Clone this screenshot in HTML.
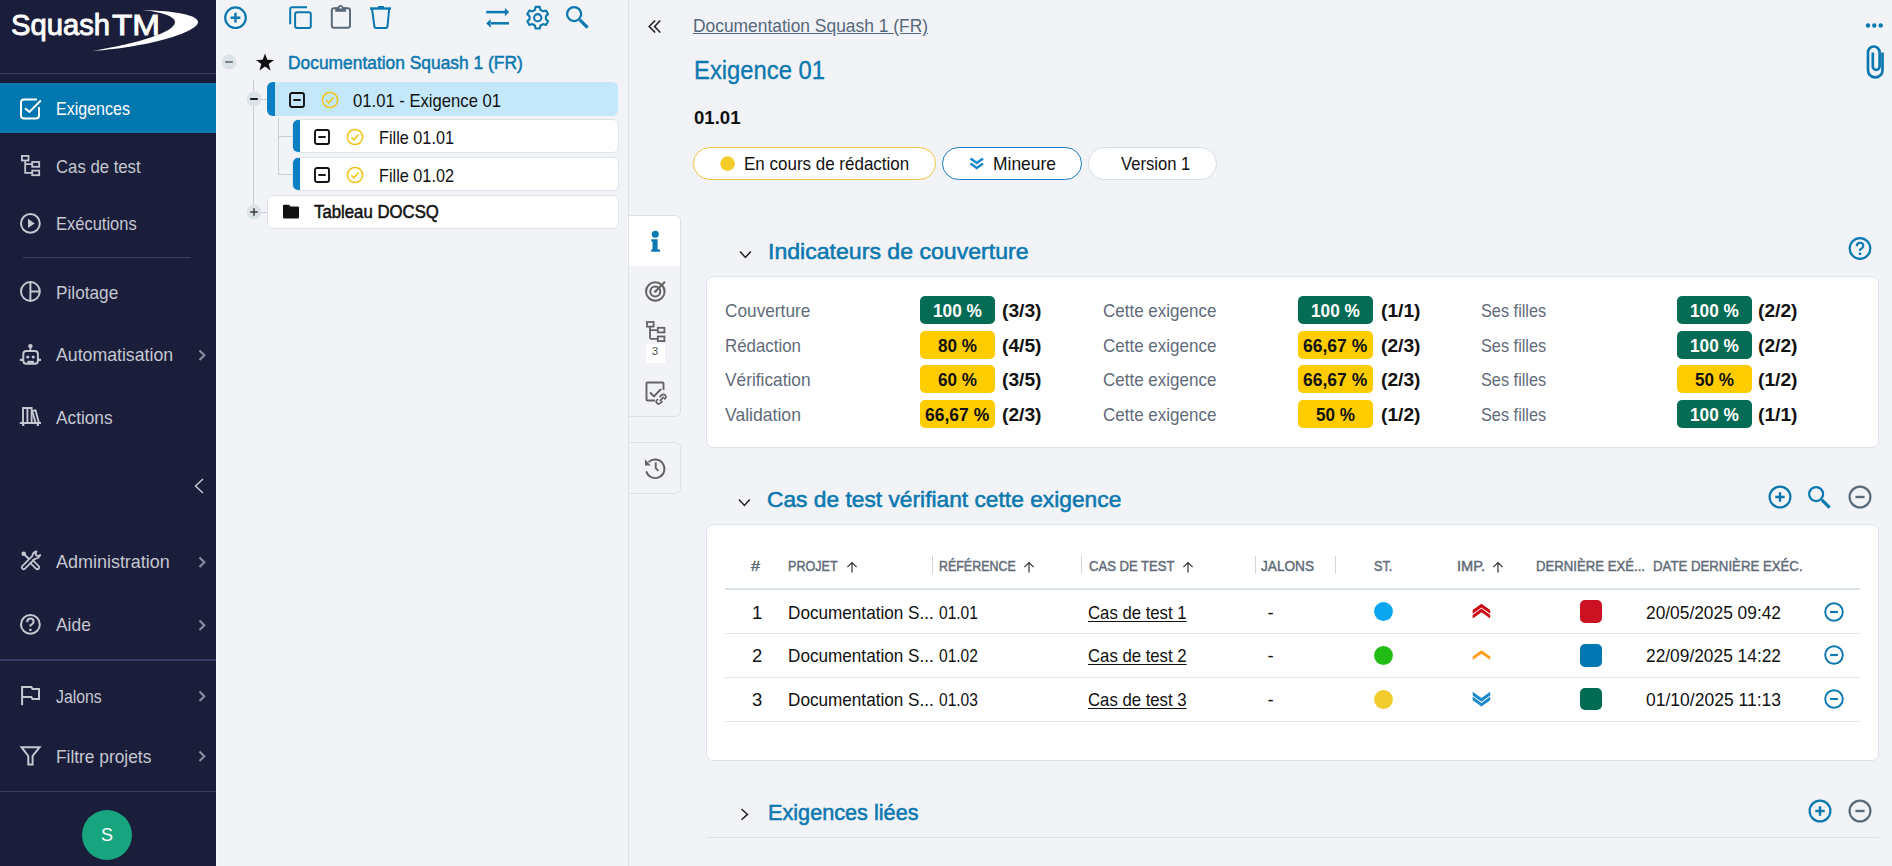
<!DOCTYPE html>
<html><head><meta charset="utf-8"><title>Squash TM</title>
<style>
html,body{margin:0;padding:0;}
body{width:1892px;height:866px;overflow:hidden;position:relative;background:#f2f3f7;font-family:"Liberation Sans",sans-serif;}
.t{position:absolute;white-space:nowrap;}
svg{overflow:visible}
</style></head><body>

<div style="position:absolute;left:0px;top:0px;width:216px;height:866px;background:#1b1e3a"></div>
<div style="position:absolute;left:216px;top:0px;width:1px;height:866px;background:#f7f8fb"></div>
<svg style="position:absolute;left:0px;top:0px" width="216" height="60" viewBox="0 0 216 60"><text x="11" y="35.3" font-family="Liberation Sans" font-size="29" fill="#fff" stroke="#fff" stroke-width="0.9" textLength="99" lengthAdjust="spacingAndGlyphs">Squash</text><text x="112" y="35.3" font-family="Liberation Sans" font-size="29" fill="#fff" stroke="#fff" stroke-width="0.9" textLength="48" lengthAdjust="spacingAndGlyphs">TM</text><path d="M143 10 C 175 11, 198 15, 198 22 C 198 32, 150 47, 92 51 C 140 43, 175 32, 175 22 C 175 16, 160 12, 143 10 Z" fill="#fff"/></svg>
<div style="position:absolute;left:0px;top:73px;width:216px;height:1px;background:#3d3f69"></div>
<div style="position:absolute;left:0px;top:83px;width:216px;height:50px;background:#0077ae"></div>
<div class="t" style="left:56px;top:100.44px;font-size:18.5px;line-height:18.5px;color:#ffffff;transform:scaleX(0.8670);transform-origin:0 0;">Exigences</div>
<div class="t" style="left:56px;top:157.74px;font-size:18.5px;line-height:18.5px;color:#c5c7d1;transform:scaleX(0.9041);transform-origin:0 0;">Cas de test</div>
<div class="t" style="left:56px;top:215.04px;font-size:18.5px;line-height:18.5px;color:#c5c7d1;transform:scaleX(0.8918);transform-origin:0 0;">Exécutions</div>
<div class="t" style="left:56px;top:284.24px;font-size:18.5px;line-height:18.5px;color:#c5c7d1;transform:scaleX(0.9304);transform-origin:0 0;">Pilotage</div>
<div class="t" style="left:56px;top:345.84px;font-size:18.5px;line-height:18.5px;color:#c5c7d1;transform:scaleX(0.9569);transform-origin:0 0;">Automatisation</div>
<div class="t" style="left:56px;top:408.84px;font-size:18.5px;line-height:18.5px;color:#c5c7d1;transform:scaleX(0.9330);transform-origin:0 0;">Actions</div>
<div class="t" style="left:56px;top:552.64px;font-size:18.5px;line-height:18.5px;color:#c5c7d1;transform:scaleX(0.9709);transform-origin:0 0;">Administration</div>
<div class="t" style="left:56px;top:616.14px;font-size:18.5px;line-height:18.5px;color:#c5c7d1;transform:scaleX(0.9399);transform-origin:0 0;">Aide</div>
<div class="t" style="left:56px;top:687.94px;font-size:18.5px;line-height:18.5px;color:#c5c7d1;transform:scaleX(0.8546);transform-origin:0 0;">Jalons</div>
<div class="t" style="left:56px;top:748.04px;font-size:18.5px;line-height:18.5px;color:#c5c7d1;transform:scaleX(0.9364);transform-origin:0 0;">Filtre projets</div>
<div style="position:absolute;left:23px;top:257px;width:168px;height:1px;background:#3d3f69"></div>
<div style="position:absolute;left:0px;top:659px;width:216px;height:2px;background:#393b63"></div>
<div style="position:absolute;left:0px;top:791px;width:216px;height:1px;background:#3d3f69"></div>
<svg style="position:absolute;left:196px;top:349px" width="12" height="12" viewBox="0 0 12 12"><path d="M3.5 1.5 L8.3 6.2 L3.5 10.9" fill="none" stroke="#8b8ea0" stroke-width="2.1"/></svg>
<svg style="position:absolute;left:196px;top:555.5px" width="12" height="12" viewBox="0 0 12 12"><path d="M3.5 1.5 L8.3 6.2 L3.5 10.9" fill="none" stroke="#8b8ea0" stroke-width="2.1"/></svg>
<svg style="position:absolute;left:196px;top:618.5px" width="12" height="12" viewBox="0 0 12 12"><path d="M3.5 1.5 L8.3 6.2 L3.5 10.9" fill="none" stroke="#8b8ea0" stroke-width="2.1"/></svg>
<svg style="position:absolute;left:196px;top:690px" width="12" height="12" viewBox="0 0 12 12"><path d="M3.5 1.5 L8.3 6.2 L3.5 10.9" fill="none" stroke="#8b8ea0" stroke-width="2.1"/></svg>
<svg style="position:absolute;left:196px;top:750px" width="12" height="12" viewBox="0 0 12 12"><path d="M3.5 1.5 L8.3 6.2 L3.5 10.9" fill="none" stroke="#8b8ea0" stroke-width="2.1"/></svg>
<svg style="position:absolute;left:192px;top:478px" width="14" height="16" viewBox="0 0 14 16"><path d="M11 1 L3.5 8 L11 15" fill="none" stroke="#c5c7d1" stroke-width="1.5"/></svg>
<div style="position:absolute;left:82px;top:810px;width:50px;height:50px;border-radius:50%;background:#17a57f;color:#fff;font-size:18px;line-height:50px;text-align:center">S</div>
<svg style="position:absolute;left:15px;top:95px" width="30" height="30" viewBox="0 0 30 30"><path d="M22 4.5 H9 Q6 4.5 6 7.5 V20.5 Q6 23.5 9 23.5 H21 Q24 23.5 24 20.5 V12" fill="none" stroke="#fff" stroke-width="2"/><path d="M10 13.2 L14.4 17 L25.8 5.5" fill="none" stroke="#fff" stroke-width="2"/></svg>
<svg style="position:absolute;left:15px;top:150px" width="30" height="30" viewBox="0 0 30 30"><rect x="6.9" y="5.9" width="6.6" height="4.6" fill="none" stroke="#c5c7d1" stroke-width="1.8"/><rect x="17.2" y="12" width="7" height="4.8" fill="none" stroke="#c5c7d1" stroke-width="1.8"/><rect x="17.2" y="20.6" width="7" height="4.6" fill="none" stroke="#c5c7d1" stroke-width="1.8"/><path d="M10.2 10.5 V22.8 H17.2 M10.2 14.2 H17.2" fill="none" stroke="#c5c7d1" stroke-width="1.8"/></svg>
<svg style="position:absolute;left:15px;top:208px" width="30" height="30" viewBox="0 0 30 30"><circle cx="15.4" cy="15.4" r="9.4" fill="none" stroke="#c5c7d1" stroke-width="2"/><path d="M13 10.7 V20.1 L19.7 15.4 Z" fill="#c5c7d1"/></svg>
<svg style="position:absolute;left:15px;top:277px" width="30" height="30" viewBox="0 0 30 30"><circle cx="15.4" cy="14.5" r="9.4" fill="none" stroke="#c5c7d1" stroke-width="2"/><path d="M15.4 5 V24 M15.4 14.5 H24.8" fill="none" stroke="#c5c7d1" stroke-width="2"/></svg>
<svg style="position:absolute;left:15px;top:339px" width="30" height="30" viewBox="0 0 30 30"><circle cx="15.4" cy="7.1" r="2.2" fill="#c5c7d1"/><path d="M15.4 7 V12" stroke="#c5c7d1" stroke-width="1.8"/><rect x="8.3" y="12.1" width="14.6" height="12.7" rx="3" fill="none" stroke="#c5c7d1" stroke-width="2"/><circle cx="12.8" cy="18" r="1.6" fill="#c5c7d1"/><circle cx="18.2" cy="18" r="1.6" fill="#c5c7d1"/><rect x="12.3" y="21.8" width="6.6" height="2.4" fill="#c5c7d1"/><path d="M4.8 20.8 H8.3 M22.9 20.8 H26" stroke="#c5c7d1" stroke-width="2.2"/></svg>
<svg style="position:absolute;left:15px;top:402px" width="30" height="30" viewBox="0 0 30 30"><path d="M4.8 21 H26 M8.2 21 V24 M22.8 21 V24" stroke="#c5c7d1" stroke-width="2.2" fill="none"/><path d="M8 21 V6 H16.6 V21 M12.4 6 V21" fill="none" stroke="#c5c7d1" stroke-width="1.9"/><path d="M17 9 L20.5 8.4 L24 21 M17.3 9.5 L20.6 21" fill="none" stroke="#c5c7d1" stroke-width="1.9"/></svg>
<svg style="position:absolute;left:15px;top:546px" width="30" height="30" viewBox="0 0 30 30"><circle cx="8.7" cy="7.8" r="2.3" fill="#c5c7d1"/><path d="M8.7 7.8 L14.2 13.3" stroke="#c5c7d1" stroke-width="2"/><path d="M17.27 13.73 L23.77 20.23 A1.8 1.8 0 0 1 21.23 22.77 L14.73 16.27" fill="none" stroke="#c5c7d1" stroke-width="1.8" stroke-linejoin="round"/><path d="M9.77 22.77 L19.77 12.77 Q23.5 13 25.2 9 L22.2 10 L20.5 8.3 L21.5 5.3 Q17.5 6.5 17.23 10.23 L7.23 20.23 A1.8 1.8 0 0 0 9.77 22.77 Z" fill="none" stroke="#c5c7d1" stroke-width="1.8" stroke-linejoin="round"/></svg>
<svg style="position:absolute;left:15px;top:609px" width="30" height="30" viewBox="0 0 30 30"><circle cx="15.4" cy="15.4" r="9.4" fill="none" stroke="#c5c7d1" stroke-width="2"/><path d="M12.2 13.2 Q12.2 9.6 15.4 9.6 Q18.6 9.6 18.6 12.6 Q18.6 14.6 15.4 16.4 V17.6" fill="none" stroke="#c5c7d1" stroke-width="2"/><rect x="14.2" y="19.8" width="2.4" height="2.2" fill="#c5c7d1"/></svg>
<svg style="position:absolute;left:15px;top:681px" width="30" height="30" viewBox="0 0 30 30"><path d="M7.1 24.2 V6.1 H16.4 L17.5 8 H24 V18 H17.5 L16.4 16 H7.1" fill="none" stroke="#c5c7d1" stroke-width="2"/></svg>
<svg style="position:absolute;left:15px;top:741px" width="30" height="30" viewBox="0 0 30 30"><path d="M6.5 6.2 H24.6 L17.6 15 V23.5 H13.3 V15 Z" fill="none" stroke="#c5c7d1" stroke-width="2" stroke-linejoin="miter"/></svg>
<div style="position:absolute;left:628px;top:0px;width:1px;height:866px;background:#dde2e9"></div>
<svg style="position:absolute;left:222px;top:5px" width="26" height="26" viewBox="0 0 26 26"><circle cx="13.5" cy="12.7" r="10.3" fill="none" stroke="#0b78b0" stroke-width="2.2"/><path d="M13.5 7.8 V17.6 M8.6 12.7 H18.4" stroke="#0b78b0" stroke-width="2.4"/></svg>
<svg style="position:absolute;left:284px;top:2px" width="32" height="32" viewBox="0 0 32 32"><path d="M6.2 22.2 V7.2 Q6.2 5.2 8.2 5.2 H23" fill="none" stroke="#0b78b0" stroke-width="2"/><rect x="11.1" y="10.2" width="15.7" height="15.7" rx="2" fill="none" stroke="#0b78b0" stroke-width="2"/></svg>
<svg style="position:absolute;left:328px;top:2px" width="26" height="30" viewBox="0 0 26 30"><rect x="3.8" y="6.3" width="18.2" height="19.4" rx="2.2" fill="none" stroke="#5b6b7a" stroke-width="2"/><path d="M7.2 5.3 H18 V9.8 H7.2 Z" fill="#5b6b7a"/><circle cx="12.6" cy="5.5" r="2.6" fill="#5b6b7a"/><circle cx="12.6" cy="5.8" r="1" fill="#f2f3f7"/></svg>
<svg style="position:absolute;left:366px;top:2px" width="28" height="30" viewBox="0 0 28 30"><path d="M4 6.5 H25" stroke="#0b78b0" stroke-width="2.4"/><path d="M12 5.2 H18" stroke="#0b78b0" stroke-width="2.4"/><path d="M6 6.5 L8.4 24.5 Q8.6 26 10.2 26 H19.7 Q21.3 26 21.5 24.5 L23.2 6.5" fill="none" stroke="#0b78b0" stroke-width="2"/></svg>
<svg style="position:absolute;left:482px;top:2px" width="32" height="30" viewBox="0 0 32 30"><path d="M4.2 10.1 H23" stroke="#0b78b0" stroke-width="2.5"/><path d="M22.9 5.9 L27.1 10.1 L22.9 14.2 Z" fill="#0b78b0"/><path d="M9 21.3 H27" stroke="#0b78b0" stroke-width="2.5"/><path d="M8.7 17.2 L4.2 21.3 L8.7 25.7 Z" fill="#0b78b0"/></svg>
<svg style="position:absolute;left:522px;top:2px" width="32" height="32" viewBox="0 0 32 32"><path d="M12.86 7.90 L13.60 4.90 L17.80 4.90 L18.54 7.90 L21.04 9.34 L24.00 8.48 L26.10 12.12 L23.87 14.26 L23.87 17.14 L26.10 19.28 L24.00 22.92 L21.04 22.06 L18.54 23.50 L17.80 26.50 L13.60 26.50 L12.86 23.50 L10.36 22.06 L7.40 22.92 L5.30 19.28 L7.53 17.14 L7.53 14.26 L5.30 12.12 L7.40 8.48 L10.36 9.34 Z" fill="none" stroke="#0b78b0" stroke-width="2.1" stroke-linejoin="round"/><circle cx="15.7" cy="15.7" r="3.6" fill="none" stroke="#0b78b0" stroke-width="2.1"/></svg>
<svg style="position:absolute;left:562px;top:2px" width="30" height="30" viewBox="0 0 30 30"><circle cx="12.1" cy="12.1" r="7" fill="none" stroke="#0b78b0" stroke-width="2.2"/><path d="M17.8 17.8 L25.6 25.6" stroke="#0b78b0" stroke-width="3.2"/></svg>
<div style="position:absolute;left:253px;top:80px;width:1px;height:132px;background:#c9ced4"></div>
<div style="position:absolute;left:278px;top:118px;width:1px;height:56px;background:#c9ced4"></div>
<div style="position:absolute;left:278px;top:136px;width:14px;height:1px;background:#c9ced4"></div>
<div style="position:absolute;left:278px;top:174px;width:14px;height:1px;background:#c9ced4"></div>
<div style="position:absolute;left:260px;top:99px;width:7px;height:1px;background:#c9ced4"></div>
<div style="position:absolute;left:260px;top:212px;width:7px;height:1px;background:#c9ced4"></div>
<svg style="position:absolute;left:220.5px;top:53.7px" width="16" height="16" viewBox="0 0 16 16"><circle cx="8" cy="8" r="7.5" fill="#dce3e8"/><path d="M4.2 8 H11.8" stroke="#666" stroke-width="1.6"/></svg>
<svg style="position:absolute;left:245.7px;top:91.2px" width="16" height="16" viewBox="0 0 16 16"><circle cx="8" cy="8" r="7.5" fill="#dce3e8"/><path d="M4.2 8 H11.8" stroke="#111" stroke-width="1.9"/></svg>
<svg style="position:absolute;left:245.5px;top:203.8px" width="16" height="16" viewBox="0 0 16 16"><circle cx="8" cy="8" r="7.5" fill="#dce3e8"/><path d="M4.2 8 H11.8" stroke="#444" stroke-width="1.6"/><path d="M8 4.2 V11.8" stroke="#444" stroke-width="1.6"/></svg>
<svg style="position:absolute;left:255px;top:52px" width="20" height="20" viewBox="0 0 20 20"><path d="M10 1.5 L12.3 7.8 L19 7.9 L13.7 12 L15.6 18.5 L10 14.6 L4.4 18.5 L6.3 12 L1 7.9 L7.7 7.8 Z" fill="#111"/></svg>
<div class="t" style="left:288px;top:54.73px;font-size:17.8px;line-height:17.8px;color:#0b78b0;transform:scaleX(0.9775);transform-origin:0 0;-webkit-text-stroke:0.5px #0b78b0;">Documentation Squash 1 (FR)</div>
<div style="position:absolute;left:267px;top:82px;width:351px;height:34px;background:#c4e8fa;border-radius:6px;overflow:hidden"><div style="position:absolute;left:0;top:0;width:8px;height:34px;background:#0a7fc4"></div></div>
<svg style="position:absolute;left:289px;top:91.5px" width="16" height="16" viewBox="0 0 16 16"><rect x="1" y="1" width="14" height="14" rx="2" fill="none" stroke="#111" stroke-width="1.9"/><path d="M4.3 8 H11.7" stroke="#111" stroke-width="1.9"/></svg>
<svg style="position:absolute;left:321px;top:90.5px" width="18" height="18" viewBox="0 0 18 18"><circle cx="9" cy="9" r="7.6" fill="none" stroke="#f0c419" stroke-width="1.5"/><path d="M5.4 9.4 L7.9 11.8 L12.6 6.6" fill="none" stroke="#f0c419" stroke-width="1.5"/></svg>
<div class="t" style="left:352.7px;top:92.53px;font-size:17.8px;line-height:17.8px;color:#111;transform:scaleX(0.9360);transform-origin:0 0;">01.01 - Exigence 01</div>
<div style="position:absolute;left:291.5px;top:119px;width:325px;height:32px;background:#fff;border:1px solid #dde3ea;border-radius:6px;overflow:hidden"><div style="position:absolute;left:-1px;top:-1px;width:8px;height:34px;background:#0a7fc4"></div></div>
<svg style="position:absolute;left:314px;top:128.5px" width="16" height="16" viewBox="0 0 16 16"><rect x="1" y="1" width="14" height="14" rx="2" fill="none" stroke="#111" stroke-width="1.9"/><path d="M4.3 8 H11.7" stroke="#111" stroke-width="1.9"/></svg>
<svg style="position:absolute;left:346px;top:127.5px" width="18" height="18" viewBox="0 0 18 18"><circle cx="9" cy="9" r="7.6" fill="none" stroke="#f0c419" stroke-width="1.5"/><path d="M5.4 9.4 L7.9 11.8 L12.6 6.6" fill="none" stroke="#f0c419" stroke-width="1.5"/></svg>
<div class="t" style="left:378.5px;top:130.13px;font-size:17.8px;line-height:17.8px;color:#111;transform:scaleX(0.9144);transform-origin:0 0;">Fille 01.01</div>
<div style="position:absolute;left:291.5px;top:157px;width:325px;height:32px;background:#fff;border:1px solid #dde3ea;border-radius:6px;overflow:hidden"><div style="position:absolute;left:-1px;top:-1px;width:8px;height:34px;background:#0a7fc4"></div></div>
<svg style="position:absolute;left:314px;top:166.5px" width="16" height="16" viewBox="0 0 16 16"><rect x="1" y="1" width="14" height="14" rx="2" fill="none" stroke="#111" stroke-width="1.9"/><path d="M4.3 8 H11.7" stroke="#111" stroke-width="1.9"/></svg>
<svg style="position:absolute;left:346px;top:165.5px" width="18" height="18" viewBox="0 0 18 18"><circle cx="9" cy="9" r="7.6" fill="none" stroke="#f0c419" stroke-width="1.5"/><path d="M5.4 9.4 L7.9 11.8 L12.6 6.6" fill="none" stroke="#f0c419" stroke-width="1.5"/></svg>
<div class="t" style="left:378.5px;top:167.73px;font-size:17.8px;line-height:17.8px;color:#111;transform:scaleX(0.9144);transform-origin:0 0;">Fille 01.02</div>
<div style="position:absolute;left:267px;top:194.5px;width:350px;height:32px;background:#fff;border:1px solid #dde3ea;border-radius:6px"></div>
<svg style="position:absolute;left:282px;top:203px" width="18" height="17" viewBox="0 0 18 17"><path d="M1 3 Q1 1.8 2.2 1.8 H7 L8.6 3.6 H15.8 Q17 3.6 17 4.8 V14.2 Q17 15.4 15.8 15.4 H2.2 Q1 15.4 1 14.2 Z" fill="#111"/></svg>
<div class="t" style="left:313.6px;top:204.43px;font-size:17.8px;line-height:17.8px;color:#111;transform:scaleX(0.9429);transform-origin:0 0;-webkit-text-stroke:0.5px #111;">Tableau DOCSQ</div>
<svg style="position:absolute;left:646px;top:19px" width="18" height="16" viewBox="0 0 18 16"><path d="M9.2 1.5 L3.2 7.5 L9.2 13.5 M14.3 1.5 L8.6 7.5 L14.3 13.5" fill="none" stroke="#222" stroke-width="1.6"/></svg>
<div class="t" style="left:693px;top:17.26px;font-size:18px;line-height:18px;color:#56687a;transform:scaleX(0.9666);transform-origin:0 0;text-decoration:underline;text-underline-offset:1px;">Documentation Squash 1 (FR)</div>
<div class="t" style="left:693.6px;top:58.41px;font-size:25.5px;line-height:25.5px;color:#0b78b0;transform:scaleX(0.9334);transform-origin:0 0;-webkit-text-stroke:0.35px #0b78b0;">Exigence 01</div>
<div class="t" style="left:693.5px;top:108.86px;font-size:18.6px;line-height:18.6px;color:#111;font-weight:bold;transform:scaleX(0.9991);transform-origin:0 0;">01.01</div>
<svg style="position:absolute;left:1865px;top:20px" width="22" height="10" viewBox="0 0 22 10"><circle cx="3" cy="5.5" r="2.2" fill="#0b78b0"/><circle cx="9.3" cy="5.5" r="2.2" fill="#0b78b0"/><circle cx="15.7" cy="5.5" r="2.2" fill="#0b78b0"/></svg>
<svg style="position:absolute;left:1860px;top:40px" width="30" height="42" viewBox="0 0 30 42"><path d="M12.8 12.5 V26.5 A3.4 3.4 0 0 0 19.6 26.5 V12.3 A5.8 5.8 0 0 0 8 12.3 V30.2 A7.25 7.25 0 0 0 22.5 30.2 V12.5" fill="none" stroke="#0b78b0" stroke-width="2.7"/></svg>
<div style="position:absolute;left:693px;top:147px;width:241px;height:31px;border:1px solid #f0c53c;border-radius:17px;background:#fff"></div>
<svg style="position:absolute;left:720px;top:156px" width="16" height="16" viewBox="0 0 16 16"><circle cx="7.6" cy="7.6" r="7.3" fill="#f4cd2a"/></svg>
<div class="t" style="left:743.8px;top:156.43px;font-size:17.8px;line-height:17.8px;color:#111;transform:scaleX(0.9552);transform-origin:0 0;">En cours de rédaction</div>
<div style="position:absolute;left:942px;top:147px;width:138px;height:31px;border:1px solid #1a7dc0;border-radius:17px;background:#fff"></div>
<svg style="position:absolute;left:968px;top:156px" width="18" height="16" viewBox="0 0 18 16"><path d="M2.5 2.5 L8.8 7 L15 2.5 M2.5 7.5 L8.8 12 L15 7.5" fill="none" stroke="#1b88d0" stroke-width="2.6"/></svg>
<div class="t" style="left:993px;top:156.43px;font-size:17.8px;line-height:17.8px;color:#111;transform:scaleX(0.9796);transform-origin:0 0;">Mineure</div>
<div style="position:absolute;left:1088px;top:147px;width:127px;height:31px;border:1px solid #d5dfe7;border-radius:17px;background:#fff"></div>
<div class="t" style="left:1120.8px;top:156.43px;font-size:17.8px;line-height:17.8px;color:#111;transform:scaleX(0.9351);transform-origin:0 0;">Version 1</div>
<div style="position:absolute;left:629px;top:215px;width:51px;height:200px;border:1px solid #dce2e9;border-left:none;border-radius:0 6px 6px 0;background:#f2f3f7;overflow:hidden"><div style="position:absolute;left:0;top:0;width:51px;height:50px;background:#fff"></div></div>
<div style="position:absolute;left:629px;top:442px;width:51px;height:50px;border:1px solid #dce2e9;border-left:none;border-radius:0 6px 6px 0;background:#f2f3f7"></div>
<svg style="position:absolute;left:645px;top:228px" width="20" height="28" viewBox="0 0 20 28"><circle cx="10.3" cy="6.2" r="3.5" fill="#0b78b0"/><path d="M6.2 11.3 H12.6 V21.5 H15 V23.8 H6.2 V21.5 H7.5 V13.6 H6.2 Z" fill="#0b78b0"/></svg>
<svg style="position:absolute;left:643px;top:279px" width="26" height="26" viewBox="0 0 26 26"><circle cx="12.3" cy="12.5" r="9.3" fill="none" stroke="#636363" stroke-width="2"/><circle cx="12.3" cy="12.5" r="5" fill="none" stroke="#636363" stroke-width="2"/><circle cx="12.3" cy="12.5" r="1.2" fill="#636363"/><path d="M12.3 12.5 L22 2.8" stroke="#636363" stroke-width="2"/></svg>
<svg style="position:absolute;left:644px;top:318px" width="24" height="26" viewBox="0 0 24 26"><rect x="3" y="4" width="6.6" height="4.6" fill="none" stroke="#636363" stroke-width="1.8"/><rect x="13.8" y="9.8" width="6.6" height="4.6" fill="none" stroke="#636363" stroke-width="1.8"/><rect x="13.8" y="18.5" width="6.6" height="4.6" fill="none" stroke="#636363" stroke-width="1.8"/><path d="M6 8.6 V19.5 Q6 20.8 7.3 20.8 H13.8 M6 12.1 H13.8" fill="none" stroke="#636363" stroke-width="1.8"/></svg>
<div style="position:absolute;left:646px;top:344px;width:19px;height:19px;background:#fff"></div>
<div class="t" style="left:651.8px;top:346.27px;font-size:11.5px;line-height:11.5px;color:#555;">3</div>
<svg style="position:absolute;left:644px;top:380px" width="28" height="26" viewBox="0 0 28 26"><path d="M19.5 10 V3.5 Q19.5 2.5 18.5 2.5 H3.5 Q2.5 2.5 2.5 3.5 V19.5 Q2.5 20.5 3.5 20.5 H11" fill="none" stroke="#636363" stroke-width="1.9"/><path d="M6 12.5 L10 16.3 L17 9" fill="none" stroke="#636363" stroke-width="1.9"/><path d="M15.5 17.2 L17.7 15 Q19.5 13.5 21.2 15.2 Q22.6 16.8 21.2 18.4 L20.2 19.4 M18.5 21 L16.3 23.2 Q14.6 24.8 13 23.2 Q11.4 21.6 13 20 L14 19 M15.8 20.8 L19.8 16.8" fill="none" stroke="#636363" stroke-width="1.7"/></svg>
<svg style="position:absolute;left:643px;top:456px" width="26" height="26" viewBox="0 0 26 26"><path d="M3.2 15.3 A 9.3 9.3 0 1 0 5.6 6.2" fill="none" stroke="#636363" stroke-width="1.9"/><path d="M2 3.2 V9.6 H7.8 Z" fill="#636363"/><path d="M12.7 6.3 V12.1 L15.4 14.9" fill="none" stroke="#636363" stroke-width="1.9"/></svg>
<svg style="position:absolute;left:738.5px;top:249.7px" width="14" height="10" viewBox="0 0 14 10"><path d="M1 1.5 L6.4 7.5 L11.8 1.5" fill="none" stroke="#222" stroke-width="1.5"/></svg>
<div class="t" style="left:767.5px;top:241.45px;font-size:22.5px;line-height:22.5px;color:#0b78b0;transform:scaleX(1.0260);transform-origin:0 0;-webkit-text-stroke:0.55px #0b78b0;">Indicateurs de couverture</div>
<svg style="position:absolute;left:1847px;top:236px" width="26" height="26" viewBox="0 0 26 26"><circle cx="13" cy="12.5" r="10.3" fill="none" stroke="#0b78b0" stroke-width="2.2"/><path d="M9.7 10.3 Q9.7 6.7 13 6.7 Q16.3 6.7 16.3 9.8 Q16.3 11.8 13 13.6 V15" fill="none" stroke="#0b78b0" stroke-width="2.1"/><rect x="11.8" y="16.6" width="2.4" height="2.4" fill="#0b78b0"/></svg>
<div style="position:absolute;left:705.5px;top:276px;width:1171.5px;height:170px;border:1px solid #dce3ea;border-radius:7px;background:#fff"></div>
<div class="t" style="left:724.7px;top:301.64px;font-size:18.5px;line-height:18.5px;color:#5f6b79;transform:scaleX(0.9321);transform-origin:0 0;">Couverture</div>
<div style="position:absolute;left:920px;top:296px;width:75px;height:28px;border-radius:5px;background:#046c54"></div>
<div class="t" style="left:933.05px;top:302.06px;font-size:18px;line-height:18px;color:#fff;font-weight:bold;transform:scaleX(0.9581);transform-origin:0 0;">100 %</div>
<div class="t" style="left:1002px;top:302.06px;font-size:18px;line-height:18px;color:#111;font-weight:bold;transform:scaleX(1.0673);transform-origin:0 0;">(3/3)</div>
<div class="t" style="left:1103.2px;top:301.64px;font-size:18.5px;line-height:18.5px;color:#5f6b79;transform:scaleX(0.9189);transform-origin:0 0;">Cette exigence</div>
<div style="position:absolute;left:1298px;top:296px;width:75px;height:28px;border-radius:5px;background:#046c54"></div>
<div class="t" style="left:1311.05px;top:302.06px;font-size:18px;line-height:18px;color:#fff;font-weight:bold;transform:scaleX(0.9581);transform-origin:0 0;">100 %</div>
<div class="t" style="left:1380.6px;top:302.06px;font-size:18px;line-height:18px;color:#111;font-weight:bold;transform:scaleX(1.0673);transform-origin:0 0;">(1/1)</div>
<div class="t" style="left:1481px;top:301.64px;font-size:18.5px;line-height:18.5px;color:#5f6b79;transform:scaleX(0.8808);transform-origin:0 0;">Ses filles</div>
<div style="position:absolute;left:1677px;top:296px;width:75px;height:28px;border-radius:5px;background:#046c54"></div>
<div class="t" style="left:1690.05px;top:302.06px;font-size:18px;line-height:18px;color:#fff;font-weight:bold;transform:scaleX(0.9581);transform-origin:0 0;">100 %</div>
<div class="t" style="left:1758.2px;top:302.06px;font-size:18px;line-height:18px;color:#111;font-weight:bold;transform:scaleX(1.0673);transform-origin:0 0;">(2/2)</div>
<div class="t" style="left:724.7px;top:336.64px;font-size:18.5px;line-height:18.5px;color:#5f6b79;transform:scaleX(0.9111);transform-origin:0 0;">Rédaction</div>
<div style="position:absolute;left:920px;top:331px;width:75px;height:28px;border-radius:5px;background:#ffcc00"></div>
<div class="t" style="left:938.0px;top:337.06px;font-size:18px;line-height:18px;color:#111;font-weight:bold;transform:scaleX(0.9506);transform-origin:0 0;">80 %</div>
<div class="t" style="left:1002px;top:337.06px;font-size:18px;line-height:18px;color:#111;font-weight:bold;transform:scaleX(1.0673);transform-origin:0 0;">(4/5)</div>
<div class="t" style="left:1103.2px;top:336.64px;font-size:18.5px;line-height:18.5px;color:#5f6b79;transform:scaleX(0.9189);transform-origin:0 0;">Cette exigence</div>
<div style="position:absolute;left:1298px;top:331px;width:75px;height:28px;border-radius:5px;background:#ffcc00"></div>
<div class="t" style="left:1303.4px;top:337.06px;font-size:18px;line-height:18px;color:#111;font-weight:bold;transform:scaleX(0.9720);transform-origin:0 0;">66,67 %</div>
<div class="t" style="left:1380.6px;top:337.06px;font-size:18px;line-height:18px;color:#111;font-weight:bold;transform:scaleX(1.0673);transform-origin:0 0;">(2/3)</div>
<div class="t" style="left:1481px;top:336.64px;font-size:18.5px;line-height:18.5px;color:#5f6b79;transform:scaleX(0.8808);transform-origin:0 0;">Ses filles</div>
<div style="position:absolute;left:1677px;top:331px;width:75px;height:28px;border-radius:5px;background:#046c54"></div>
<div class="t" style="left:1690.05px;top:337.06px;font-size:18px;line-height:18px;color:#fff;font-weight:bold;transform:scaleX(0.9581);transform-origin:0 0;">100 %</div>
<div class="t" style="left:1758.2px;top:337.06px;font-size:18px;line-height:18px;color:#111;font-weight:bold;transform:scaleX(1.0673);transform-origin:0 0;">(2/2)</div>
<div class="t" style="left:724.7px;top:370.94px;font-size:18.5px;line-height:18.5px;color:#5f6b79;transform:scaleX(0.9354);transform-origin:0 0;">Vérification</div>
<div style="position:absolute;left:920px;top:365.3px;width:75px;height:28px;border-radius:5px;background:#ffcc00"></div>
<div class="t" style="left:938.0px;top:371.36px;font-size:18px;line-height:18px;color:#111;font-weight:bold;transform:scaleX(0.9506);transform-origin:0 0;">60 %</div>
<div class="t" style="left:1002px;top:371.36px;font-size:18px;line-height:18px;color:#111;font-weight:bold;transform:scaleX(1.0673);transform-origin:0 0;">(3/5)</div>
<div class="t" style="left:1103.2px;top:370.94px;font-size:18.5px;line-height:18.5px;color:#5f6b79;transform:scaleX(0.9189);transform-origin:0 0;">Cette exigence</div>
<div style="position:absolute;left:1298px;top:365.3px;width:75px;height:28px;border-radius:5px;background:#ffcc00"></div>
<div class="t" style="left:1303.4px;top:371.36px;font-size:18px;line-height:18px;color:#111;font-weight:bold;transform:scaleX(0.9720);transform-origin:0 0;">66,67 %</div>
<div class="t" style="left:1380.6px;top:371.36px;font-size:18px;line-height:18px;color:#111;font-weight:bold;transform:scaleX(1.0673);transform-origin:0 0;">(2/3)</div>
<div class="t" style="left:1481px;top:370.94px;font-size:18.5px;line-height:18.5px;color:#5f6b79;transform:scaleX(0.8808);transform-origin:0 0;">Ses filles</div>
<div style="position:absolute;left:1677px;top:365.3px;width:75px;height:28px;border-radius:5px;background:#ffcc00"></div>
<div class="t" style="left:1695.0px;top:371.36px;font-size:18px;line-height:18px;color:#111;font-weight:bold;transform:scaleX(0.9506);transform-origin:0 0;">50 %</div>
<div class="t" style="left:1758.2px;top:371.36px;font-size:18px;line-height:18px;color:#111;font-weight:bold;transform:scaleX(1.0673);transform-origin:0 0;">(1/2)</div>
<div class="t" style="left:724.7px;top:405.64px;font-size:18.5px;line-height:18.5px;color:#5f6b79;transform:scaleX(0.9502);transform-origin:0 0;">Validation</div>
<div style="position:absolute;left:920px;top:400px;width:75px;height:28px;border-radius:5px;background:#ffcc00"></div>
<div class="t" style="left:925.4px;top:406.06px;font-size:18px;line-height:18px;color:#111;font-weight:bold;transform:scaleX(0.9720);transform-origin:0 0;">66,67 %</div>
<div class="t" style="left:1002px;top:406.06px;font-size:18px;line-height:18px;color:#111;font-weight:bold;transform:scaleX(1.0673);transform-origin:0 0;">(2/3)</div>
<div class="t" style="left:1103.2px;top:405.64px;font-size:18.5px;line-height:18.5px;color:#5f6b79;transform:scaleX(0.9189);transform-origin:0 0;">Cette exigence</div>
<div style="position:absolute;left:1298px;top:400px;width:75px;height:28px;border-radius:5px;background:#ffcc00"></div>
<div class="t" style="left:1316.0px;top:406.06px;font-size:18px;line-height:18px;color:#111;font-weight:bold;transform:scaleX(0.9506);transform-origin:0 0;">50 %</div>
<div class="t" style="left:1380.6px;top:406.06px;font-size:18px;line-height:18px;color:#111;font-weight:bold;transform:scaleX(1.0673);transform-origin:0 0;">(1/2)</div>
<div class="t" style="left:1481px;top:405.64px;font-size:18.5px;line-height:18.5px;color:#5f6b79;transform:scaleX(0.8808);transform-origin:0 0;">Ses filles</div>
<div style="position:absolute;left:1677px;top:400px;width:75px;height:28px;border-radius:5px;background:#046c54"></div>
<div class="t" style="left:1690.05px;top:406.06px;font-size:18px;line-height:18px;color:#fff;font-weight:bold;transform:scaleX(0.9581);transform-origin:0 0;">100 %</div>
<div class="t" style="left:1758.2px;top:406.06px;font-size:18px;line-height:18px;color:#111;font-weight:bold;transform:scaleX(1.0673);transform-origin:0 0;">(1/1)</div>
<svg style="position:absolute;left:738px;top:497.5px" width="14" height="10" viewBox="0 0 14 10"><path d="M1 1.5 L6.4 7.5 L11.8 1.5" fill="none" stroke="#222" stroke-width="1.5"/></svg>
<div class="t" style="left:767.3px;top:488.95px;font-size:22.5px;line-height:22.5px;color:#0b78b0;transform:scaleX(1.0117);transform-origin:0 0;-webkit-text-stroke:0.55px #0b78b0;">Cas de test vérifiant cette exigence</div>
<svg style="position:absolute;left:1766.7px;top:483.5px" width="26" height="26" viewBox="0 0 26 26"><circle cx="13" cy="13" r="10.4" fill="none" stroke="#0b78b0" stroke-width="2.2"/><path d="M13 8.3 V17.7 M8.3 13 H17.7" stroke="#0b78b0" stroke-width="2.4"/></svg>
<svg style="position:absolute;left:1806px;top:484px" width="28" height="28" viewBox="0 0 28 28"><circle cx="10.1" cy="10.1" r="7" fill="none" stroke="#0b78b0" stroke-width="2.2"/><path d="M15.8 15.8 L23.6 23.6" stroke="#0b78b0" stroke-width="3.2"/></svg>
<svg style="position:absolute;left:1847.2px;top:483.5px" width="26" height="26" viewBox="0 0 26 26"><circle cx="13" cy="13" r="10.4" fill="none" stroke="#5b6b7a" stroke-width="2.2"/><path d="M8.399999999999999 13 H17.6" stroke="#5b6b7a" stroke-width="2.4000000000000004"/></svg>
<div style="position:absolute;left:705.5px;top:524px;width:1171.5px;height:235px;border:1px solid #dce3ea;border-radius:7px;background:#fff"></div>
<div class="t" style="left:751.4px;top:559.23px;font-size:14.5px;line-height:14.5px;color:#5f6b79;transform:scaleX(1.1161);transform-origin:0 0;-webkit-text-stroke:0.45px #5f6b79;">#</div>
<div class="t" style="left:787.8px;top:559.23px;font-size:14.5px;line-height:14.5px;color:#5f6b79;transform:scaleX(0.8671);transform-origin:0 0;-webkit-text-stroke:0.45px #5f6b79;">PROJET</div>
<svg style="position:absolute;left:845.5px;top:561px" width="12" height="12" viewBox="0 0 12 12"><path d="M6 11.5 V1.8 M1.4 6.2 L6 1.6 L10.6 6.2" fill="none" stroke="#333" stroke-width="1.2"/></svg>
<div class="t" style="left:939.2px;top:559.23px;font-size:14.5px;line-height:14.5px;color:#5f6b79;transform:scaleX(0.8576);transform-origin:0 0;-webkit-text-stroke:0.45px #5f6b79;">RÉFÉRENCE</div>
<svg style="position:absolute;left:1023px;top:561px" width="12" height="12" viewBox="0 0 12 12"><path d="M6 11.5 V1.8 M1.4 6.2 L6 1.6 L10.6 6.2" fill="none" stroke="#333" stroke-width="1.2"/></svg>
<div class="t" style="left:1088.9px;top:559.23px;font-size:14.5px;line-height:14.5px;color:#5f6b79;transform:scaleX(0.9018);transform-origin:0 0;-webkit-text-stroke:0.45px #5f6b79;">CAS DE TEST</div>
<svg style="position:absolute;left:1181.5px;top:561px" width="12" height="12" viewBox="0 0 12 12"><path d="M6 11.5 V1.8 M1.4 6.2 L6 1.6 L10.6 6.2" fill="none" stroke="#333" stroke-width="1.2"/></svg>
<div class="t" style="left:1261.1px;top:559.23px;font-size:14.5px;line-height:14.5px;color:#5f6b79;transform:scaleX(0.9396);transform-origin:0 0;-webkit-text-stroke:0.45px #5f6b79;">JALONS</div>
<div class="t" style="left:1374.1px;top:559.23px;font-size:14.5px;line-height:14.5px;color:#5f6b79;transform:scaleX(0.8687);transform-origin:0 0;-webkit-text-stroke:0.45px #5f6b79;">ST.</div>
<div class="t" style="left:1457.4px;top:559.23px;font-size:14.5px;line-height:14.5px;color:#5f6b79;transform:scaleX(1.0058);transform-origin:0 0;-webkit-text-stroke:0.45px #5f6b79;">IMP.</div>
<svg style="position:absolute;left:1491.5px;top:561px" width="12" height="12" viewBox="0 0 12 12"><path d="M6 11.5 V1.8 M1.4 6.2 L6 1.6 L10.6 6.2" fill="none" stroke="#333" stroke-width="1.2"/></svg>
<div class="t" style="left:1536px;top:559.23px;font-size:14.5px;line-height:14.5px;color:#5f6b79;transform:scaleX(0.9079);transform-origin:0 0;-webkit-text-stroke:0.45px #5f6b79;">DERNIÈRE EXÉ...</div>
<div class="t" style="left:1653.2px;top:559.23px;font-size:14.5px;line-height:14.5px;color:#5f6b79;transform:scaleX(0.9116);transform-origin:0 0;-webkit-text-stroke:0.45px #5f6b79;">DATE DERNIÈRE EXÉC.</div>
<div style="position:absolute;left:931.5px;top:556px;width:1px;height:18px;background:#cfd6dd"></div>
<div style="position:absolute;left:1081px;top:556px;width:1px;height:18px;background:#cfd6dd"></div>
<div style="position:absolute;left:1254.5px;top:556px;width:1px;height:18px;background:#cfd6dd"></div>
<div style="position:absolute;left:1334.5px;top:556px;width:1px;height:18px;background:#cfd6dd"></div>
<div style="position:absolute;left:725px;top:587.5px;width:1135px;height:2.5px;background:#dbe3ea"></div>
<div style="position:absolute;left:725px;top:633px;width:1135px;height:1px;background:#e1e7ed"></div>
<div style="position:absolute;left:725px;top:677px;width:1135px;height:1px;background:#e1e7ed"></div>
<div style="position:absolute;left:725px;top:721px;width:1135px;height:1px;background:#e1e7ed"></div>
<div class="t" style="left:752px;top:603.54px;font-size:18.5px;line-height:18.5px;color:#111;">1</div>
<div class="t" style="left:787.8px;top:603.54px;font-size:18.5px;line-height:18.5px;color:#111;transform:scaleX(0.9267);transform-origin:0 0;">Documentation S...</div>
<div class="t" style="left:938.6px;top:603.54px;font-size:18.5px;line-height:18.5px;color:#111;transform:scaleX(0.8402);transform-origin:0 0;">01.01</div>
<div class="t" style="left:1088.4px;top:603.54px;font-size:18.5px;line-height:18.5px;color:#111;transform:scaleX(0.9045);transform-origin:0 0;text-decoration:underline;text-underline-offset:2px;">Cas de test 1</div>
<div class="t" style="left:1267.5px;top:603.54px;font-size:18.5px;line-height:18.5px;color:#111;">-</div>
<svg style="position:absolute;left:1373.5px;top:602.0px" width="19" height="19" viewBox="0 0 19 19"><circle cx="9.5" cy="9.5" r="9.4" fill="#0aa6ef"/></svg>
<svg style="position:absolute;left:1472px;top:603.0px" width="19" height="17" viewBox="0 0 19 17"><path d="M0.7 7.1 L9.45 0.8 L18.2 7.1 V10.7 L9.45 4.4 L0.7 10.7 Z M0.7 11.9 L9.45 5.6 L18.2 11.9 V15.5 L9.45 9.2 L0.7 15.5 Z" fill="#cc0a17"/></svg>
<div style="position:absolute;left:1580px;top:600.2px;width:22px;height:22.5px;border-radius:5px;background:#cc1122"></div>
<div class="t" style="left:1646px;top:603.54px;font-size:18.5px;line-height:18.5px;color:#111;transform:scaleX(0.9373);transform-origin:0 0;">20/05/2025 09:42</div>
<svg style="position:absolute;left:1821.4px;top:598.5px" width="26" height="26" viewBox="0 0 26 26"><circle cx="13" cy="13" r="8.8" fill="none" stroke="#0b78b0" stroke-width="1.9"/><path d="M9.1 13 H16.9" stroke="#0b78b0" stroke-width="2.1"/></svg>
<div class="t" style="left:752px;top:647.34px;font-size:18.5px;line-height:18.5px;color:#111;">2</div>
<div class="t" style="left:787.8px;top:647.34px;font-size:18.5px;line-height:18.5px;color:#111;transform:scaleX(0.9267);transform-origin:0 0;">Documentation S...</div>
<div class="t" style="left:938.6px;top:647.34px;font-size:18.5px;line-height:18.5px;color:#111;transform:scaleX(0.8402);transform-origin:0 0;">01.02</div>
<div class="t" style="left:1088.4px;top:647.34px;font-size:18.5px;line-height:18.5px;color:#111;transform:scaleX(0.9045);transform-origin:0 0;text-decoration:underline;text-underline-offset:2px;">Cas de test 2</div>
<div class="t" style="left:1267.5px;top:647.34px;font-size:18.5px;line-height:18.5px;color:#111;">-</div>
<svg style="position:absolute;left:1373.5px;top:645.8px" width="19" height="19" viewBox="0 0 19 19"><circle cx="9.5" cy="9.5" r="9.4" fill="#21bc14"/></svg>
<svg style="position:absolute;left:1472px;top:646.8px" width="19" height="17" viewBox="0 0 19 17"><path d="M0.7 9.5 L9.45 3.2 L18.2 9.5 V13.1 L9.45 6.8 L0.7 13.1 Z" fill="#ff9a1a"/></svg>
<div style="position:absolute;left:1580px;top:644.0px;width:22px;height:22.5px;border-radius:5px;background:#0077b3"></div>
<div class="t" style="left:1646px;top:647.34px;font-size:18.5px;line-height:18.5px;color:#111;transform:scaleX(0.9373);transform-origin:0 0;">22/09/2025 14:22</div>
<svg style="position:absolute;left:1821.4px;top:642.3px" width="26" height="26" viewBox="0 0 26 26"><circle cx="13" cy="13" r="8.8" fill="none" stroke="#0b78b0" stroke-width="1.9"/><path d="M9.1 13 H16.9" stroke="#0b78b0" stroke-width="2.1"/></svg>
<div class="t" style="left:752px;top:691.14px;font-size:18.5px;line-height:18.5px;color:#111;">3</div>
<div class="t" style="left:787.8px;top:691.14px;font-size:18.5px;line-height:18.5px;color:#111;transform:scaleX(0.9267);transform-origin:0 0;">Documentation S...</div>
<div class="t" style="left:938.6px;top:691.14px;font-size:18.5px;line-height:18.5px;color:#111;transform:scaleX(0.8402);transform-origin:0 0;">01.03</div>
<div class="t" style="left:1088.4px;top:691.14px;font-size:18.5px;line-height:18.5px;color:#111;transform:scaleX(0.9045);transform-origin:0 0;text-decoration:underline;text-underline-offset:2px;">Cas de test 3</div>
<div class="t" style="left:1267.5px;top:691.14px;font-size:18.5px;line-height:18.5px;color:#111;">-</div>
<svg style="position:absolute;left:1373.5px;top:689.6px" width="19" height="19" viewBox="0 0 19 19"><circle cx="9.5" cy="9.5" r="9.4" fill="#f2cc2d"/></svg>
<svg style="position:absolute;left:1472px;top:690.6px" width="19" height="17" viewBox="0 0 19 17"><path d="M0.7 0.8 L9.45 7.1 L18.2 0.8 V4.4 L9.45 10.7 L0.7 4.4 Z M0.7 5.6 L9.45 11.9 L18.2 5.6 V9.2 L9.45 15.5 L0.7 9.2 Z" fill="#1a88cc"/></svg>
<div style="position:absolute;left:1580px;top:687.8px;width:22px;height:22.5px;border-radius:5px;background:#006b53"></div>
<div class="t" style="left:1646px;top:691.14px;font-size:18.5px;line-height:18.5px;color:#111;transform:scaleX(0.9463);transform-origin:0 0;">01/10/2025 11:13</div>
<svg style="position:absolute;left:1821.4px;top:686.1px" width="26" height="26" viewBox="0 0 26 26"><circle cx="13" cy="13" r="8.8" fill="none" stroke="#0b78b0" stroke-width="1.9"/><path d="M9.1 13 H16.9" stroke="#0b78b0" stroke-width="2.1"/></svg>
<svg style="position:absolute;left:740px;top:808px" width="10" height="14" viewBox="0 0 10 14"><path d="M1.5 1 L7.5 6.4 L1.5 11.8" fill="none" stroke="#222" stroke-width="1.5"/></svg>
<div class="t" style="left:767.8px;top:802.25px;font-size:22.5px;line-height:22.5px;color:#0b78b0;transform:scaleX(0.9627);transform-origin:0 0;-webkit-text-stroke:0.55px #0b78b0;">Exigences liées</div>
<svg style="position:absolute;left:1806.6px;top:797.5px" width="26" height="26" viewBox="0 0 26 26"><circle cx="13" cy="13" r="10.4" fill="none" stroke="#0b78b0" stroke-width="2.2"/><path d="M13 8.3 V17.7 M8.3 13 H17.7" stroke="#0b78b0" stroke-width="2.4"/></svg>
<svg style="position:absolute;left:1846.8px;top:797.5px" width="26" height="26" viewBox="0 0 26 26"><circle cx="13" cy="13" r="10.4" fill="none" stroke="#5b6b7a" stroke-width="2.2"/><path d="M8.399999999999999 13 H17.6" stroke="#5b6b7a" stroke-width="2.4000000000000004"/></svg>
<div style="position:absolute;left:705.5px;top:837px;width:1173.5px;height:1px;background:#dbe3ea"></div>
</body></html>
